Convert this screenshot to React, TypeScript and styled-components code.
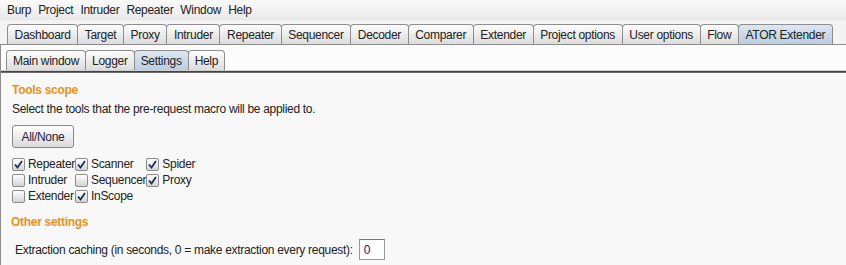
import React, { useState } from 'react';
import styled, { createGlobalStyle } from 'styled-components';

const GlobalStyle = createGlobalStyle`
    html, body {
        margin: 0;
        padding: 0;
        background: #f8f8f8;
        font-family: "Liberation Sans", Arial, sans-serif;
        font-size: 12px;
        letter-spacing: -0.3px;
        color: #222;
    }
`;

const StyledRoot = styled.div`
    width: 846px;
    height: 265px;
    overflow: hidden;
    background: #f8f8f8;
`;

const StyledMenuBar = styled.div`
    height: 20px;
    display: flex;
    align-items: center;
    gap: 7px;
    padding-left: 7px;
    background: linear-gradient(#fafafa, #e9e9e9);
    font-size: 12px;
`;

const StyledTabArea = styled.div`
    padding-top: 4px;
    background: #f3f3f3;
`;

const StyledTabRow = styled.div<{ $inset: number }>`
    display: flex;
    padding-left: ${({ $inset }) => $inset}px;
`;

const StyledTab = styled.div<{ $selected?: boolean; $pad: number }>`
    height: 20px;
    box-sizing: border-box;
    display: flex;
    align-items: center;
    padding: 0 ${({ $pad }) => $pad}px;
    margin-right: -1px;
    border: 1px solid #8e8e8e;
    border-bottom: none;
    border-radius: 4px 4px 0 0;
    background: ${({ $selected }) =>
        $selected
            ? 'linear-gradient(#dde7f1, #b9cde0)'
            : 'linear-gradient(#fdfdfd, #dcdcdc)'};
    color: #222;
    white-space: nowrap;
`;

const StyledOuterPanel = styled.div`
    border-top: 1px solid #8e8e8e;
    border-left: 1px solid #8e8e8e;
    padding-top: 5px;
    background: #fcfcfc;
`;

const StyledInnerPanel = styled.div`
    border-top: 1px solid #d0d0d0;
    box-shadow: inset 0 1px 0 #444, inset 0 2px 0 #6b6b6b;
    padding: 12px 0 0 11px;
    height: 200px;
    background: #f8f8f8;
`;

const StyledHeading = styled.div`
    color: #e8921b;
    font-weight: bold;
    font-size: 12px;
    height: 16px;
`;

const StyledText = styled.div`
    margin-top: 3px;
    height: 16px;
`;

const StyledButton = styled.button`
    margin-top: 7px;
    width: 62px;
    height: 23px;
    border: 1px solid #8a8a8a;
    border-radius: 3px;
    background: linear-gradient(#ffffff, #dadada);
    font-family: "Liberation Sans", Arial, sans-serif;
    font-size: 12px;
    letter-spacing: -0.3px;
    color: #1e1e3c;
    padding: 0;
`;

const StyledGrid = styled.div`
    margin-top: 8px;
    display: grid;
    grid-template-columns: auto auto auto;
    justify-content: start;
    grid-auto-rows: 16px;
`;

const StyledCheckItem = styled.label`
    display: flex;
    align-items: center;
    gap: 3px;
    white-space: nowrap;
`;

const StyledBox = styled.span`
    width: 13px;
    height: 13px;
    box-sizing: border-box;
    border: 1px solid #8c8c8c;
    border-radius: 2px;
    background: linear-gradient(#ffffff, #d4d4d4);
    display: flex;
    align-items: center;
    justify-content: center;
`;

const StyledOtherHeading = styled(StyledHeading)`
    margin-top: 11px;
    margin-left: -1px;
`;

const StyledCachingRow = styled.div`
    margin-top: 8px;
    margin-left: 3px;
    display: flex;
    align-items: center;
    gap: 6px;
`;

const StyledInput = styled.div`
    width: 26px;
    height: 21px;
    box-sizing: border-box;
    border: 1px solid #9a9a9a;
    border-top-color: #7a7a7a;
    background: #fff;
    padding-left: 4px;
    display: flex;
    align-items: center;
    color: #1a1a50;
`;

const menuItems = ['Burp', 'Project', 'Intruder', 'Repeater', 'Window', 'Help'];
const mainTabs = [
    'Dashboard',
    'Target',
    'Proxy',
    'Intruder',
    'Repeater',
    'Sequencer',
    'Decoder',
    'Comparer',
    'Extender',
    'Project options',
    'User options',
    'Flow',
    'ATOR Extender',
];
const subTabs = ['Main window', 'Logger', 'Settings', 'Help'];

const tools = [
    { name: 'Repeater', checked: true },
    { name: 'Scanner', checked: true },
    { name: 'Spider', checked: true },
    { name: 'Intruder', checked: false },
    { name: 'Sequencer', checked: false },
    { name: 'Proxy', checked: true },
    { name: 'Extender', checked: false },
    { name: 'InScope', checked: true },
];

const CheckMark = () => (
    <svg width="9" height="9" viewBox="0 0 9 9">
        <path
            d="M1 4.5 L3.5 7.5 L8 1"
            fill="none"
            stroke="#1f2f55"
            strokeWidth="1.8"
        />
    </svg>
);

export default function App() {
    const [checked, setChecked] = useState(tools.map((t) => t.checked));

    return (
        <StyledRoot>
            <GlobalStyle />
            <StyledMenuBar>
                {menuItems.map((item) => (
                    <span key={item}>{item}</span>
                ))}
            </StyledMenuBar>
            <StyledTabArea>
                <StyledTabRow $inset={7}>
                    {mainTabs.map((tab) => (
                        <StyledTab
                            key={tab}
                            $pad={6.6}
                            $selected={tab === 'ATOR Extender'}
                        >
                            {tab}
                        </StyledTab>
                    ))}
                </StyledTabRow>
                <StyledOuterPanel>
                    <StyledTabRow $inset={5}>
                        {subTabs.map((tab) => (
                            <StyledTab
                                key={tab}
                                $pad={6}
                                $selected={tab === 'Settings'}
                            >
                                {tab}
                            </StyledTab>
                        ))}
                    </StyledTabRow>
                    <StyledInnerPanel>
                        <StyledHeading>Tools scope</StyledHeading>
                        <StyledText>
                            Select the tools that the pre-request macro will be
                            applied to.
                        </StyledText>
                        <StyledButton
                            onClick={() =>
                                setChecked(checked.map(() => !checked.every(Boolean)))
                            }
                        >
                            All/None
                        </StyledButton>
                        <StyledGrid>
                            {tools.map((tool, i) => (
                                <StyledCheckItem
                                    key={tool.name}
                                    onClick={() =>
                                        setChecked(
                                            checked.map((c, j) => (j === i ? !c : c))
                                        )
                                    }
                                >
                                    <StyledBox>
                                        {checked[i] && <CheckMark />}
                                    </StyledBox>
                                    {tool.name}
                                </StyledCheckItem>
                            ))}
                        </StyledGrid>
                        <StyledOtherHeading>Other settings</StyledOtherHeading>
                        <StyledCachingRow>
                            Extraction caching (in seconds, 0 = make extraction every
                            request):
                            <StyledInput>0</StyledInput>
                        </StyledCachingRow>
                    </StyledInnerPanel>
                </StyledOuterPanel>
            </StyledTabArea>
        </StyledRoot>
    );
}
